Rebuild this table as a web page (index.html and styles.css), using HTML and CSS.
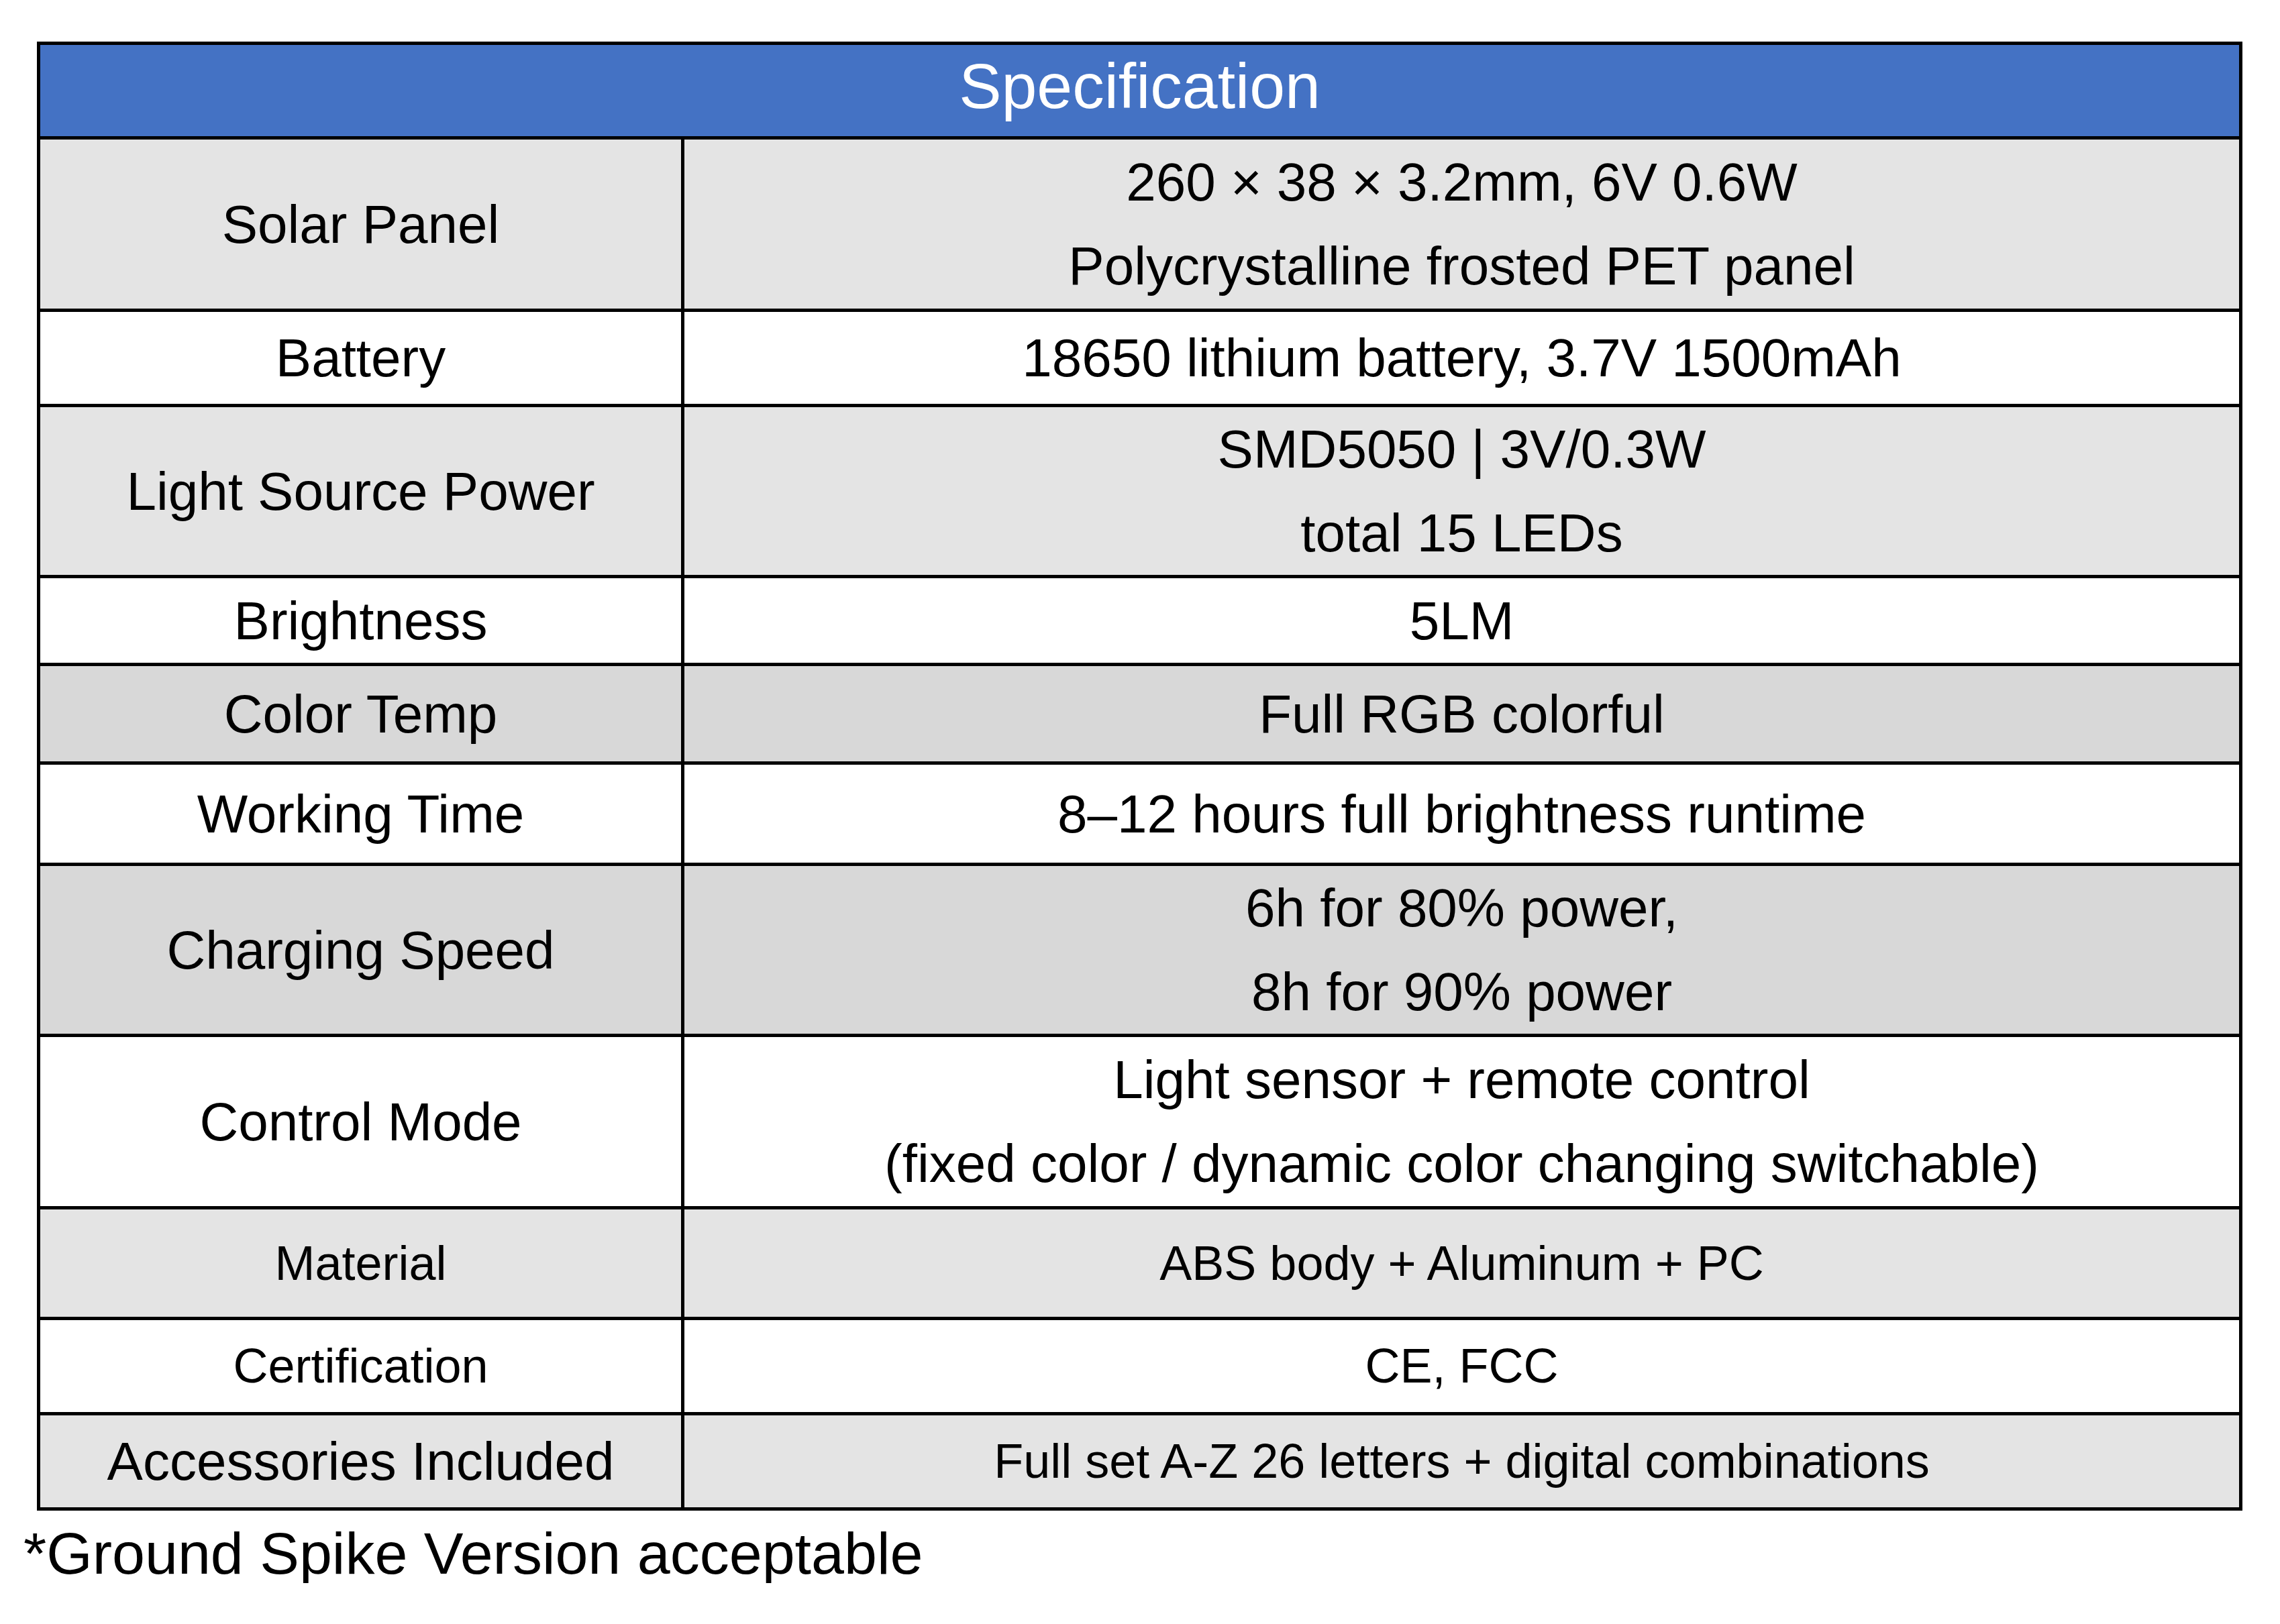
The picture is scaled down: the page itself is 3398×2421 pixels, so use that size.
FILE: index.html
```html
<!DOCTYPE html>
<html lang="en">
<head>
<meta charset="utf-8">
<title>Specification</title>
<link rel="stylesheet" href="styles.css">
</head>
<body>
<div class="spec">
  <div class="cell head">Specification</div>

  <div class="cell label gray">Solar Panel</div>
  <div class="cell value gray"><span>260 × 38 × 3.2mm, 6V 0.6W</span><span>Polycrystalline frosted PET panel</span></div>

  <div class="cell label white">Battery</div>
  <div class="cell value white">18650 lithium battery, 3.7V 1500mAh</div>

  <div class="cell label gray">Light Source Power</div>
  <div class="cell value gray"><span>SMD5050 | 3V/0.3W</span><span>total 15 LEDs</span></div>

  <div class="cell label white">Brightness</div>
  <div class="cell value white">5LM</div>

  <div class="cell label dark">Color Temp</div>
  <div class="cell value dark">Full RGB colorful</div>

  <div class="cell label white">Working Time</div>
  <div class="cell value white">8–12 hours full brightness runtime</div>

  <div class="cell label dark">Charging Speed</div>
  <div class="cell value dark"><span>6h for 80% power,</span><span>8h for 90% power</span></div>

  <div class="cell label white">Control Mode</div>
  <div class="cell value white"><span>Light sensor + remote control</span><span>(fixed color / dynamic color changing switchable)</span></div>

  <div class="cell label gray small">Material</div>
  <div class="cell value gray small">ABS body + Aluminum + PC</div>

  <div class="cell label white small">Certification</div>
  <div class="cell value white small">CE, FCC</div>

  <div class="cell label gray">Accessories Included</div>
  <div class="cell value gray small">Full set A-Z 26 letters + digital combinations</div>
</div>
<p class="note">*Ground Spike Version acceptable</p>
</body>
</html>
```

FILE: styles.css
```css
html, body {
  margin: 0;
  padding: 0;
  background: #ffffff;
}

body {
  font-family: "Liberation Sans", Arial, sans-serif;
  color: #000000;
}

.spec {
  display: grid;
  grid-template-columns: 955px 2317px;
  grid-template-rows: 136px 252px 137px 250px 126px 142px 146px 250px 252px 160px 137px 137px;
  gap: 5px;
  padding: 5px;
  width: max-content;
  margin: 62px 0 0 55px;
  background: #000000;
}

.cell {
  display: flex;
  flex-direction: column;
  align-items: center;
  justify-content: center;
  text-align: center;
  font-size: 80px;
  line-height: 125px;
  white-space: nowrap;
}

.head {
  grid-column: 1 / span 2;
  background: #4472c4;
  color: #ffffff;
  font-size: 95px;
  padding-bottom: 14px;
}

.gray { background: #e4e4e4; }
.dark { background: #d8d8d8; }
.white { background: #ffffff; }

.small { font-size: 72px; }

.note {
  margin: 20px 0 0 35px;
  font-size: 88px;
  line-height: 88px;
}
```
